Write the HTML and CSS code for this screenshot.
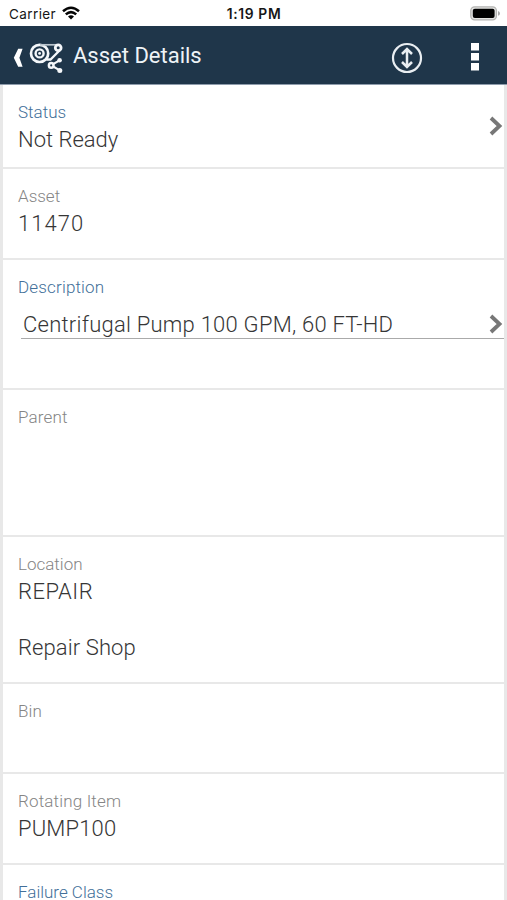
FILE: index.html
```html
<!DOCTYPE html>
<html lang="en">
<head>
<meta charset="utf-8">
<title>Asset Details</title>
<link rel="stylesheet" href="styles.css">
</head>
<body>
<div class="statusbar">
  <div class="carrier"><span>Carrier</span>
    <svg width="18" height="14" viewBox="0 0 18 14"><g fill="none" stroke="#050505" stroke-width="2.5"><path d="M1 5.2Q9-1.8 17 5.2"/><path d="M3.8 8.4Q9 3.8 14.2 8.4"/></g><path d="M6 10.4Q9 8 12 10.4L9 13.6z" fill="#050505"/></svg>
  </div>
  <span class="clock">1:19 PM</span>
  <svg class="battery" width="31" height="15" viewBox="0 0 31 15"><rect x=".8" y=".8" width="25.6" height="13" rx="3.8" fill="#e4e4e2" stroke="#b4b4b2" stroke-width="1.3"/><rect x="2.8" y="2.7" width="21.8" height="9.2" rx="2" fill="#000"/><path d="M28 5q2 .8 2 2.4t-2 2.4z" fill="#aaa"/></svg>
</div>
<header class="appbar">
  <svg class="back" width="10" height="20" viewBox="0 0 10 20"><path d="M5.2 .8H9.6L6.4 9.8L9.6 18.8H5.2L.8 9.8z" fill="#fff"/></svg>
  <svg class="logo" width="34" height="32" viewBox="0 0 34 32"><g fill="none" stroke="#f4f7fa"><circle cx="10.6" cy="11.4" r="8.6" stroke-width="2.7"/><circle cx="10.6" cy="11.4" r="4" stroke-width="2.4"/><path d="M11 2.8H28" stroke-width="1.7" stroke="#b9c4cd"/><path d="M17.5 17.5H21.5L31 8" stroke-width="2.3"/><circle cx="29.2" cy="5.8" r="2.9" stroke-width="2.8"/><path d="M30.2 18.6L22 23.2L30.8 28.4" stroke-width="2.2"/></g><g fill="#f4f7fa"><circle cx="10.6" cy="11.4" r="1.4"/><circle cx="30.6" cy="18.3" r="2.3"/><circle cx="30.8" cy="28.4" r="2.5"/></g><circle cx="22.2" cy="23.4" r="2.3" fill="#1f364a" stroke="#f4f7fa" stroke-width="2.5"/></svg>
  <h1>Asset Details</h1>
  <svg class="expand" width="32" height="32" viewBox="0 0 32 32" fill="none" stroke="#e9eef2"><circle cx="16" cy="16" r="14" stroke-width="2.2"/><path d="M16 8V24M11 12L16 7L21 12M11 20L16 25L21 20" stroke-width="2.5"/></svg>
  <svg class="more" width="8" height="28" viewBox="0 0 8 28" fill="#fff"><path d="M0 0H8V7.5H0zM0 10H8V17.5H0zM0 20H8V27.5H0z"/></svg>
</header>
<main>
  <section class="row status"><label class="link">Status</label><p>Not Ready</p>
    <svg class="chevron" width="14" height="20" viewBox="0 0 14 20"><path d="M2 2L10.5 10L2 18" fill="none" stroke="#777" stroke-width="3.8"/></svg></section>
  <section class="row asset"><label>Asset</label><p class="number">11470</p></section>
  <section class="row description"><label class="link wide">Description</label>
    <div class="field"><span>Centrifugal Pump 100 GPM, 60 FT-HD</span><svg width="14" height="20" viewBox="0 0 14 20"><path d="M2 2L10.5 10L2 18" fill="none" stroke="#777" stroke-width="3.8"/></svg></div></section>
  <section class="row parent"><label class="wide">Parent</label></section>
  <section class="row location"><label>Location</label><p class="code">REPAIR</p><p class="second">Repair Shop</p></section>
  <section class="row bin"><label class="wide">Bin</label></section>
  <section class="row rotating"><label class="wide">Rotating Item</label><p class="item">PUMP100</p></section>
  <section class="row failure"><label class="link">Failure Class</label></section>
</main>
</body>
</html>
```
FILE: styles.css
```css
* { box-sizing: border-box; }
body { margin: 0; height: 900px; overflow: hidden; background: #fff; font-family: Roboto, sans-serif; display: flex; flex-direction: column; }
svg { display: block; flex: none; }
.statusbar { height: 26px; flex: none; display: grid; grid-template-columns: 1fr auto 1fr; align-items: center; padding: 1px 6px 0 9px; font: 13.5px/24px Inter, sans-serif; color: #161616; }
.carrier { display: flex; align-items: center; gap: 6px; letter-spacing: .4px; }
.carrier svg { margin-top: -1px; }
.clock { font-weight: 600; font-size: 13.8px; letter-spacing: .65px; margin-left: -2px; }
.battery { justify-self: end; margin-top: -1px; }
.appbar { height: 59px; flex: none; display: flex; align-items: center; padding: 2px 28px 0 13px; background: #1f364a; border-bottom: 1px solid #8e9cac; color: #eef3f7; }
.back { margin-top: 3px; }
.logo { margin-left: 6px; margin-top: 3px; }
h1 { margin: 0 auto 0 10px; font-size: 22px; line-height: 30px; font-weight: 400; letter-spacing: 0; }
.expand { margin-right: 48px; margin-top: 4px; }
.more { margin-top: 2px; }
main { flex: 1; min-height: 0; overflow: hidden; border: solid #e8e8e8; border-width: 0 3px; }
.row { position: relative; padding: 16px 0 0 15px; border-bottom: 2px solid #e8e8e8; }
label { display: block; font-size: 17px; line-height: 22px; font-weight: 300; color: #858585; white-space: nowrap; }
.link { color: #426f99; }
.wide { letter-spacing: .17px; }
p { margin: 3px 0 0; font-size: 22px; line-height: 28px; font-weight: 300; color: #363636; white-space: nowrap; }
.number { letter-spacing: 1.05px; }
.code { letter-spacing: .5px; }
.item { letter-spacing: .15px; }
.status { height: 84px; }
.asset { height: 91px; }
.description { height: 130px; }
.parent { height: 147px; }
.location { height: 147px; }
.bin { height: 90px; }
.rotating { height: 91px; }
.failure { height: 90px; }
.second { margin-top: 28px; letter-spacing: .1px; }
.chevron { position: absolute; right: 1px; top: 31px; }
.field { display: flex; align-items: center; justify-content: space-between; height: 32px; margin: 9px 0 0 3px; padding: 3px 1px 0 2px; border-bottom: 1px solid #aaa; font-size: 22px; font-weight: 300; letter-spacing: .24px; color: #363636; white-space: nowrap; }
.field span { line-height: 28px; margin-top: 1px; }
```
